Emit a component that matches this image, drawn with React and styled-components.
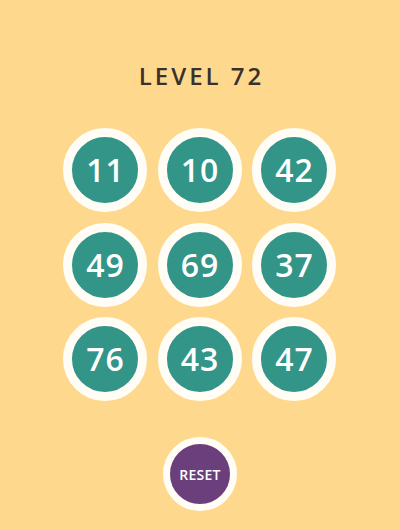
import React from "react";
import styled, { createGlobalStyle } from "styled-components";

const Global = createGlobalStyle`
  html, body { margin: 0; padding: 0; background: #fed98d; }
  body { font-family: "Open Sans", Lato, sans-serif; }
`;

const Page = styled.div`
  width: 400px;
  height: 530px;
  display: flex;
  flex-direction: column;
  align-items: center;
  background: #fed98d;
`;

const Title = styled.h1`
  margin: 60px 0 0;
  font-family: "Open Sans", Lato, sans-serif;
  font-size: 24px;
  line-height: 32px;
  font-weight: 600;
  letter-spacing: 3px;
  padding-left: 3px;
  color: #3a302c;
`;

const Grid = styled.div`
  margin-top: 36px;
  display: grid;
  grid-template-columns: repeat(3, 84px);
  gap: 10.5px;
  margin-left: -1px;
`;

const Tile = styled.button`
  width: 84px;
  height: 84px;
  border-radius: 50%;
  border: 9px solid #fffdf6;
  background: #339488;
  color: #fff;
  font-family: "Open Sans", Lato, sans-serif;
  font-size: 32px;
  font-weight: 600;
  letter-spacing: 1px;
  display: flex;
  align-items: center;
  justify-content: center;
  padding: 0 0 1px 1px;
  box-sizing: border-box;
`;

const Reset = styled.button`
  margin-top: 36px;
  width: 74px;
  height: 74px;
  border-radius: 50%;
  border: 7.5px solid #fffdf6;
  background: #6a3f7b;
  color: #fff;
  font-family: "Open Sans", Lato, sans-serif;
  font-size: 14px;
  font-weight: 600;
  letter-spacing: 0.3px;
  padding: 0;
  box-sizing: border-box;
`;

const numbers = [11, 10, 42, 49, 69, 37, 76, 43, 47];

export default function App() {
  return (
    <Page>
      <Global />
      <Title>LEVEL 72</Title>
      <Grid>
        {numbers.map((n) => (
          <Tile key={n}>{n}</Tile>
        ))}
      </Grid>
      <Reset>RESET</Reset>
    </Page>
  );
}
